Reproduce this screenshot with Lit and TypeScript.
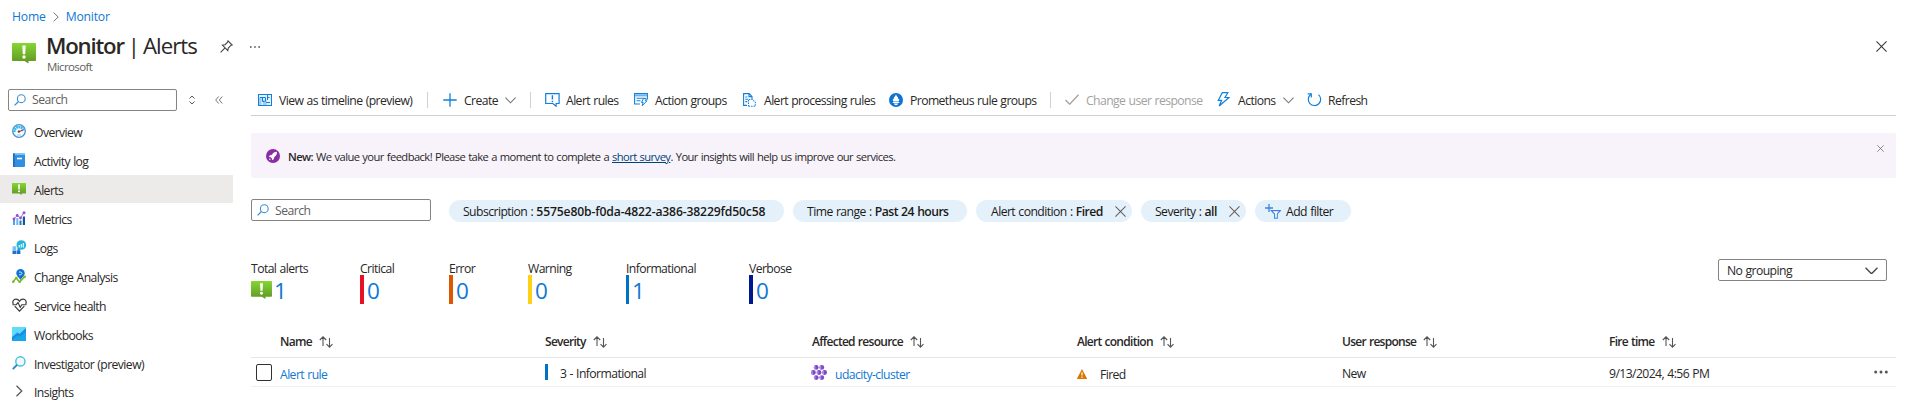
import { LitElement, html, svg, css, nothing } from "lit";
import { customElement } from "lit/decorators.js";
import { classMap } from "lit/directives/class-map.js";

const icon = (w: number, h: number, body: unknown, vb = `0 0 ${w} ${h}`) =>
  html`<svg class="ic" width=${w} height=${h} viewBox=${vb} fill="none">${body}</svg>`;

const alertIcon = (w: number, h: number) =>
  icon(w, h, svg`
    <defs><linearGradient id="g" x1="0" y1="0" x2="0" y2="1"><stop offset="0" stop-color="#86d633"/><stop offset="1" stop-color="#5e9624"/></linearGradient></defs>
    <path fill="url(#g)" d="M.8 0h22.4q.8 0 .8.8v16.400q0 .8-.8.8H16.500v2.600L12.500 18H.8q-.8 0-.8-.8V.8Q0 0 .8 0Z"/>
    <path fill="#fff" d="M10.300 2.500h3.400l-.5 8.800h-2.400z"/><circle cx="12" cy="14" r="1.700" fill="#fff"/>`, "0 0 24 20.6");

const magnifier = (color: string) => icon(12, 12, svg`<circle cx="7.300" cy="4.700" r="3.900" stroke=${color} stroke-width="1.100"/><path d="M4.500 7.500.6 11.400" stroke=${color} stroke-width="1.300"/>`);
const cross = (s: number, color: string) => icon(s, s, svg`<path d="M.5.5 11.500 11.500M11.500.5.5 11.500" stroke=${color} stroke-width="1.100"/>`, "0 0 12 12");
const chevDown = (w: number, color: string) => icon(w, w * 0.6, svg`<path d="M.5.6 6 6.200 11.500.6" stroke=${color} stroke-width="1.200"/>`, "0 0 12 7");
const sortArrows = () => icon(14, 12, svg`<path d="M4 10V.8M.8 4 4 .8 7.200 4M10.500 2v9.200M7.500 8.200l3 3 3-3" stroke="#555" stroke-width="1.100"/>`);

const nav = [
  { label: "Overview", icon: icon(14, 14, svg`<circle cx="7" cy="7" r="6.300" fill="#f4fbff" stroke="#4a8fd0" stroke-width="1.300"/><path d="M2.500 8a4.500 4.500 0 0 1 9-1" stroke="#35b8ea" stroke-width="2.600" stroke-dasharray="1.800 .5"/><path d="M6.500 7.800 10.800 6" stroke="#d13438" stroke-width="1.300"/><circle cx="6.800" cy="7.700" r="1.100" fill="#5a3a50"/><path d="M5 11h4" stroke="#8cc8ee"/>`) },
  { label: "Activity log", icon: icon(14, 14, svg`<path d="M1.500 0H12q1 0 1 1v12q0 1-1 1H1.500z" fill="#2f8fe0"/><path d="M2.500 0H13v2H2.500z" fill="#7cc4f5"/><path d="M1 .5h1.700V14H1z" fill="#1b6fba"/><path d="M5 5.500h5" stroke="#fff" stroke-width="1.600"/>`) },
  { label: "Alerts", icon: alertIcon(14, 12), selected: true },
  { label: "Metrics", icon: icon(14, 14, svg`<path d="M1 9h2v5H1z" fill="#4aa3ec"/><path d="M4.300 7h2v7h-2z" fill="#6db7f0"/><path d="M7.500 9.500h2V14h-2z" fill="#2077c5"/><path d="M10.800 5.500h2.200V14h-2.200z" fill="#12559a"/><path d="M2 8 5.200 4.500 8.500 7 12 1.500" stroke="#a46be0" stroke-width="1"/><g fill="#8f4fd6"><circle cx="2" cy="8" r="1.400"/><circle cx="5.200" cy="4.500" r="1.400"/><circle cx="8.500" cy="7" r="1.400"/><circle cx="12" cy="1.700" r="1.500"/></g>`) },
  { label: "Logs", icon: icon(14, 14, svg`<path d="M.5 6.300h3.700V10H.5z" fill="#7fbdf2"/><path d="M.5 10.500h3.700V14H.5zM4.700 10.500h3.700V14H4.700z" fill="#1d71cc"/><circle cx="9.300" cy="5" r="4.800" fill="#28b5dc"/><path d="M5.500 8 8 9.500v1.500H5.500z" fill="#1593c8"/><path d="M7.300 5v2.500M9.300 4v3.500M11.300 3v4.500" stroke="#e8faff" stroke-width="1.200"/>`) },
  { label: "Change Analysis", icon: icon(14, 14, svg`<circle cx="8.500" cy="4.300" r="4.200" fill="#1173cf"/><path d="M5.500 7 8.500 11l3-4z" fill="#1173cf"/><path d="M7 3h2l1 1.300-1 1.500H7" stroke="#bfe2ff" stroke-width="1"/><path d="M.8 13 4.200 9l3.300 4 5.500-5.500" stroke="#7cba28" stroke-width="1.600"/><g fill="#7cba28"><circle cx="1.300" cy="12.700" r="1.300"/><circle cx="4.300" cy="9" r="1.300"/><circle cx="7.800" cy="12.700" r="1.300"/><circle cx="12.700" cy="7.700" r="1.300"/></g>`) },
  { label: "Service health", icon: icon(15, 14, svg`<path d="M1.300 6.200C0 3.500 1.500 1.200 3.900 1.200 5.600 1.200 6.700 2 7.500 3.300 8.300 2 9.400 1.200 11.100 1.200c2.400 0 3.900 2.300 2.600 5M2.700 8.200l4.800 4.900 4.800-4.900" stroke="#3b3a39" stroke-width="1.200"/><path d="M.5 6.700h3.800L6 4.500l2.200 4.800L9.800 6.700h4.700" stroke="#3b3a39" stroke-width="1.100"/>`) },
  { label: "Workbooks", icon: icon(14, 14, svg`<path d="M0 0h14v14H0z" fill="#5fdcfc"/><path d="M0 10 5.500 5.500 7.500 7 14 1v13H0z" fill="#1c8be0"/><path d="M0 14V13L5.500 8.500l2 1.200L14 5v9z" fill="#17a5ec"/>`) },
  { label: "Investigator (preview)", icon: icon(14, 14, svg`<circle cx="8.400" cy="5.400" r="4.600" fill="#effbff" stroke="#44bfdc" stroke-width="1.400"/><path d="M5.200 8.700.8 13.200" stroke="#2b88c4" stroke-width="1.900"/>`) },
  { label: "Insights", icon: icon(14, 12, svg`<path d="M4.500.8 9.800 6 4.500 11.200" stroke="#555" stroke-width="1.200"/>`) },
];

const BLUE = "#1080dc";
const tools = [
  { label: "View as timeline (preview)", icon: icon(14, 12, svg`<rect x=".5" y=".5" width="13" height="11" fill="#e3f1fc" stroke=${BLUE}/><path d="M1 3.500h2.500V11H1zM5 6h3.500v5H5z" fill="#9acdf5"/><path d="M4.500 3.500v4M2 3.500h5.500M7.500 3.500v4M9.500 1v5M9.500 3.500h2M4.500 7.500h2M8 8.500h4" stroke=${BLUE}/>`) },
  { sep: true },
  { label: "Create", chev: true, icon: icon(14, 14, svg`<path d="M7 .3v13.400M.3 7h13.400" stroke=${BLUE} stroke-width="1.300"/>`) },
  { sep: true },
  { label: "Alert rules", icon: icon(15, 14, svg`<path d="M.7.7h13.400v9.800h-3v2.700L7.800 10.500H.7z" stroke=${BLUE} stroke-width="1.200"/><path d="M7.400 2.300v4.200M7.400 7.700v1.500" stroke=${BLUE} stroke-width="1.400"/>`) },
  { label: "Action groups", icon: icon(14, 13, svg`<path d="M6 11H.6V.6h12.800v6M.6 2.800h12.800M2.500 5.300h9M2.500 7.800h4" stroke=${BLUE} stroke-width="1.100"/><path d="M1 1h12v1.500H1z" fill="#8cc6f5"/><path d="m9.500 5.500 3 .3-1.200 2h1.700l-4.800 4.900 1-3.200H7.500z" fill="#fff" stroke=${BLUE}/>`) },
  { label: "Alert processing rules", icon: icon(13, 14, svg`<path d="M4 12.400H.6V.6h5.600l2.800 2.800V6M6 .8v2.800h3M2.300 4h2M2.300 6.300h3M2.300 8.600h2" stroke=${BLUE} stroke-width="1.100"/><path d="M5.500 13.300V6.500h4l2.800 2.700v4.100z" stroke=${BLUE} stroke-width="1.100" stroke-dasharray="1.400 1"/>`) },
  { label: "Prometheus rule groups", icon: icon(14, 14, svg`<circle cx="7" cy="7" r="7" fill="#0f74d1"/><path d="M7 1.500c.3 1.500 2.300 2.200 2.300 4.200 0 .8.500.8.900.3.200 1.200-.3 2-.7 2.500H4.500c-.4-.5-.9-1.300-.7-2.500.4.500.9.500.9-.3 0-2 2-2.700 2.300-4.200ZM3.800 9h6.400v1H3.800zM5 10.600h4c-.3 1-1 1.600-2 1.600s-1.700-.6-2-1.600Z" fill="#fff"/>`) },
  { sep: true },
  { label: "Change user response", disabled: true, icon: icon(14, 11, svg`<path d="M.5 6 4.700 10.200 13.500.8" stroke="#a3a1a0" stroke-width="1.300"/>`) },
  { label: "Actions", chev: true, icon: icon(13, 15, svg`<path d="M5.300.7h5.500L8 5.500h4L2.200 14 4.600 8.300H1.300z" stroke=${BLUE} stroke-width="1.200"/>`) },
  { label: "Refresh", icon: icon(15, 15, svg`<path d="M4 2.200a6.200 6.200 0 1 0 7.500.4" stroke=${BLUE} stroke-width="1.200"/><path d="M.7 1.800h3.600v3.600" stroke=${BLUE} stroke-width="1.200"/>`) },
];

const stats = [
  { label: "Total alerts", value: 1, kind: "total" },
  { label: "Critical", value: 0, kind: "critical" },
  { label: "Error", value: 0, kind: "error" },
  { label: "Warning", value: 0, kind: "warning" },
  { label: "Informational", value: 1, kind: "info" },
  { label: "Verbose", value: 0, kind: "verbose" },
];

const columns = ["Name", "Severity", "Affected resource", "Alert condition", "User response", "Fire time"];

@customElement("app-root")
export class AppRoot extends LitElement {
  static styles = css`
    :host { display: block; width: 1907px; height: 407px; overflow: hidden; background: #fff; color: #292827; font: 12.2px/18px "Open Sans", "Noto Sans", sans-serif; letter-spacing: -0.58px; word-spacing: 0.6px; white-space: nowrap; }
    * { box-sizing: border-box; }
    .ic { display: block; flex: none; }
    a { color: #0f78d4; text-decoration: none; }
    b { font-weight: 600; }
    .crumbs { display: flex; align-items: center; gap: 7px; height: 34px; padding: 0 0 0 12px; letter-spacing: -0.2px; }
    .head { display: flex; height: 44px; padding-left: 12px; }
    .head .logo { padding-top: 9px; width: 34px; }
    .titles { width: 174px; }
    h1 { margin: 0; font-size: 22.2px; line-height: 24px; font-weight: 400; letter-spacing: -1px; word-spacing: -0.7px; }
    h1 b { letter-spacing: -1.2px; }
    .sub { font-size: 11.5px; line-height: 14px; color: #605e5c; margin-top: 2px; padding-left: 1px; letter-spacing: -0.6px; }
    .head .tools { display: flex; gap: 17px; padding-top: 6px; flex: 1; }
    .head .dots { padding-top: 6px; }
    .head .close { padding: 7px 20px 0 0; }
    .body { display: flex; height: 329px; }
    aside { width: 233px; flex: none; }
    .find { display: flex; align-items: center; height: 43px; padding-left: 8px; }
    .box { display: flex; align-items: center; gap: 6px; height: 22px; border: 1px solid #868482; border-radius: 2px; padding-left: 5px; color: #605e5c; letter-spacing: -0.5px; }
    .find .box { width: 169px; }
    .box span { padding-top: 1px; }
    .find .updown { margin-left: 12px; }
    .find .fold { margin-left: 20px; }
    nav { margin-top: -4px; }
    .item { display: flex; align-items: center; height: 28px; margin-bottom: 1px; padding-left: 12px; }
    .item:last-child { margin-top: -1px; }
    .item .slot { width: 22px; }
    .item .lab { padding-top: 3px; }
    .item.on { background: #edebe9; }
    main { flex: 1; padding: 0 11px 0 18px; }
    .bar { display: grid; align-items: center; height: 38px; padding: 6px 0 0 7px; border-bottom: 1px solid #d2d0ce;
      grid-template-columns: 169px 16px 87px 15px 89px 109px 146px 161px 15px 152px 90px auto; }
    .tool { display: flex; align-items: center; gap: 7px; height: 31px; }
    .tool .slot { width: 14px; }
    .tool .lab { padding-top: 2px; }
    .tool > .ic { margin-top: 2px; }
    .tool.off { color: #a3a1a0; }
    .sep { width: 1px; height: 16px; background: #d2d0ce; }
    .banner { display: flex; align-items: center; height: 45px; margin-top: 17px; padding-left: 15px; background: #f8f3fb; border-radius: 2px; font-size: 11.2px; letter-spacing: -0.57px; }
    .banner .msg { flex: 1; padding: 2px 0 0 8px; }
    .banner a { color: #004578; text-decoration: underline; }
    .banner .x { align-self: flex-start; padding: 12px 12px 0 0; }
    .filters { display: flex; align-items: flex-end; margin-top: 21px; height: 23px; }
    .filters .box { width: 180px; margin-right: 18px; align-self: flex-start; }
    .pill { display: flex; align-items: center; height: 22px; border-radius: 11px; background: #e4f1fb; padding-left: 14px; margin-right: 9px; color: #1b1a19; }
    .pill .lab { flex: 1; padding-top: 1px; letter-spacing: -0.56px; }
    .pill .ic { margin-right: 6px; }
    .p0 { width: 335px; } .p1 { width: 174px; } .p2 { width: 156px; padding-left: 15px; } .p3 { width: 105px; } .p4 { width: 96px; padding-left: 10px; }
    .p4 .ic { margin-right: 5px; }
    .p0 b { letter-spacing: -0.16px; }
    .summary { display: flex; justify-content: space-between; height: 46px; margin-top: 36px; }
    .stats { display: grid; grid-template-columns: 109px 89px 79px 98px 123px 80px; }
    .stat .lab { display: block; height: 17px; line-height: 21px; }
    .stat .num { display: flex; align-items: center; height: 29px; font-size: 22.5px; letter-spacing: 0; padding-left: 3px; border-left: 4px solid; }
    .stat .num a { padding-top: 2px; }
    .total .num { border: 0; padding: 0; gap: 2px; }
    .critical .num { border-color: #e81123; }
    .error .num { border-color: #db5800; }
    .warning .num { border-color: #fcd116; }
    .info .num { border-color: #0072c6; border-left-width: 3px; }
    .verbose .num { border-color: #00188f; }
    .select { display: flex; align-items: center; justify-content: space-between; width: 169px; height: 22px; margin: 1px 9px 0 0; padding: 1px 8px 0; border: 1px solid #868482; border-radius: 2px; }
    .row { display: grid; grid-template-columns: 29px 265px 267px 265px 265px 267px 1fr 22px; align-items: center; }
    .row.hd { height: 54px; border-bottom: 1px solid #e8e6e4; padding-top: 22px; }
    .row.hd .cell { gap: 7px; font-weight: 600; font-size: 12px; letter-spacing: -0.72px; }
    .row.data { height: 29px; border-bottom: 1px solid #f0efee; }
    .cell { display: flex; align-items: center; }
    .cell .t { padding-top: 3px; }
    .cell .low { padding-top: 5px; }
    .check { width: 16px; height: 17px; border: 1px solid #323130; border-radius: 2px; margin-left: 5px; }
    .sev { width: 3px; height: 16px; background: #0072c6; margin-right: 12px; }
    .aks { margin: 0 8px 0 -1px; }
    .warn { margin: 4px 13px 0 0; }
  `;

  render() {
    return html`
      <div class="crumbs"><a>Home</a>${icon(6, 10, svg`<path d="M.6.6 5.200 5 .6 9.400" stroke="#777"/>`)}<a>Monitor</a></div>
      <header class="head">
        <div class="logo">${alertIcon(24, 20.6)}</div>
        <div class="titles"><h1><b>Monitor</b> | Alerts</h1><div class="sub">Microsoft</div></div>
        <div class="tools">
          ${icon(13, 13, svg`<path d="M8 .9 12.100 5 10.600 5.600 8.300 8 7.800 10.600 2.400 5.200 5 4.700 7.400 2.400zM4.800 8.200.6 12.400" stroke="#444" stroke-width="1.100"/>`)}
          <div class="dots">${icon(10, 2, svg`<path d="M0 1h1.500M4.200 1h1.500M8.400 1h1.500" stroke="#444" stroke-width="1.500"/>`)}</div>
        </div>
        <div class="close">${cross(11, "#333")}</div>
      </header>
      <div class="body">
        <aside>
          <div class="find">
            <div class="box">${magnifier("#3a8fd6")}<span>Search</span></div>
            <div class="updown">${icon(6, 10, svg`<path d="M.5 3.500 3 1l2.500 2.500M.5 6.500 3 9l2.500-2.500" stroke="#555" stroke-width="1"/>`)}</div>
            <div class="fold">${icon(8, 8, svg`<path d="M3.700.5.700 4l3 3.500M7.300.5l-3 3.500 3 3.500" stroke="#666" stroke-width=".9"/>`)}</div>
          </div>
          <nav>
            ${nav.map((n) => html`<div class=${classMap({ item: true, on: !!n.selected })}><span class="slot">${n.icon}</span><span class="lab">${n.label}</span></div>`)}
          </nav>
        </aside>
        <main>
          <div class="bar">
            ${tools.map((t) => t.sep
              ? html`<div class="sep"></div>`
              : html`<div class=${classMap({ tool: true, off: !!t.disabled })}><span class="slot">${t.icon}</span><span class="lab">${t.label}</span>${t.chev ? chevDown(11, "#777") : nothing}</div>`)}
          </div>
          <div class="banner">
            ${icon(14, 14, svg`<circle cx="7" cy="7" r="7" fill="#8a2da5"/><path d="M11 2.800C8.500 2.800 7 4 6 5.800L4 6.200 2.800 8l1.900.2 1.200 1.200.2 1.900L7.900 10l.4-2c1.800-1 2.900-2.500 2.700-5.200ZM3.800 9.200l-.9 2 2-.9z" fill="#fff"/>`)}
            <div class="msg"><b>New:</b> We value your feedback! Please take a moment to complete a <a>short survey</a>. Your insights will help us improve our services.</div>
            <div class="x">${cross(7, "#555")}</div>
          </div>
          <div class="filters">
            <div class="box">${magnifier("#3a8fd6")}<span>Search</span></div>
            <div class="pill p0"><span class="lab">Subscription : <b>5575e80b-f0da-4822-a386-38229fd50c58</b></span></div>
            <div class="pill p1"><span class="lab">Time range : <b>Past 24 hours</b></span></div>
            <div class="pill p2"><span class="lab">Alert condition : <b>Fired</b></span>${cross(11, "#605e5c")}</div>
            <div class="pill p3"><span class="lab">Severity : <b>all</b></span>${cross(11, "#605e5c")}</div>
            <div class="pill p4">${icon(16, 15, svg`<path d="M4 0v8M0 4h8" stroke="#3b82e0" stroke-width="1.300"/><path d="M6.300 6.600h9L12.300 10v4.300H9.600V10z" fill="#fff" stroke="#3b82e0" stroke-width="1.100"/>`)}<span class="lab">Add filter</span></div>
          </div>
          <div class="summary">
            <div class="stats">
              ${stats.map((s) => html`<div class="stat ${s.kind}"><span class="lab">${s.label}</span><div class="num">${s.kind === "total" ? alertIcon(21, 18) : nothing}<a>${s.value}</a></div></div>`)}
            </div>
            <div class="select"><span>No grouping</span>${chevDown(13, "#444")}</div>
          </div>
          <div class="row hd"><span></span>${columns.map((c) => html`<div class="cell"><span>${c}</span>${sortArrows()}</div>`)}</div>
          <div class="row data">
            <div class="check"></div>
            <div class="cell"><a class="low">Alert rule</a></div>
            <div class="cell"><span class="sev"></span><span class="t">3 - Informational</span></div>
            <div class="cell"><span class="aks">${icon(16, 15, svg`<g fill="#7d48c8"><circle cx="5.200" cy="2.400" r="2.400"/><circle cx="10.800" cy="2.400" r="2.400"/><circle cx="2.400" cy="7.500" r="2.400"/><circle cx="8" cy="7.500" r="2.400"/><circle cx="13.600" cy="7.500" r="2.400"/><circle cx="5.200" cy="12.600" r="2.400"/><circle cx="10.800" cy="12.600" r="2.400"/></g><g fill="#b48bea"><path d="M3 1h1.500v3H3zM8.700 1h1.500v3H8.700zM.3 6h1.500v3H.3zM5.900 6h1.500v3H5.900zM11.500 6H13v3h-1.500zM3 11h1.500v3H3zM8.700 11h1.500v3H8.700z"/></g>`)}</span><a class="low">udacity-cluster</a></div>
            <div class="cell"><span class="warn">${icon(10, 10, svg`<path d="M5 0 10 9.500 9.500 10H.5L0 9.500z" fill="#db7500"/><path d="M5 3.300v3.300M5 7.600v1.200" stroke="#fff" stroke-width="1.200"/>`)}</span><span class="low">Fired</span></div>
            <div class="cell"><span class="t">New</span></div>
            <div class="cell"><span class="t">9/13/2024, 4:56 PM</span></div>
            <div>${icon(14, 4, svg`<g fill="#555"><circle cx="1.700" cy="2" r="1.500"/><circle cx="7" cy="2" r="1.500"/><circle cx="12.300" cy="2" r="1.500"/></g>`)}</div>
          </div>
        </main>
      </div>
    `;
  }
}
